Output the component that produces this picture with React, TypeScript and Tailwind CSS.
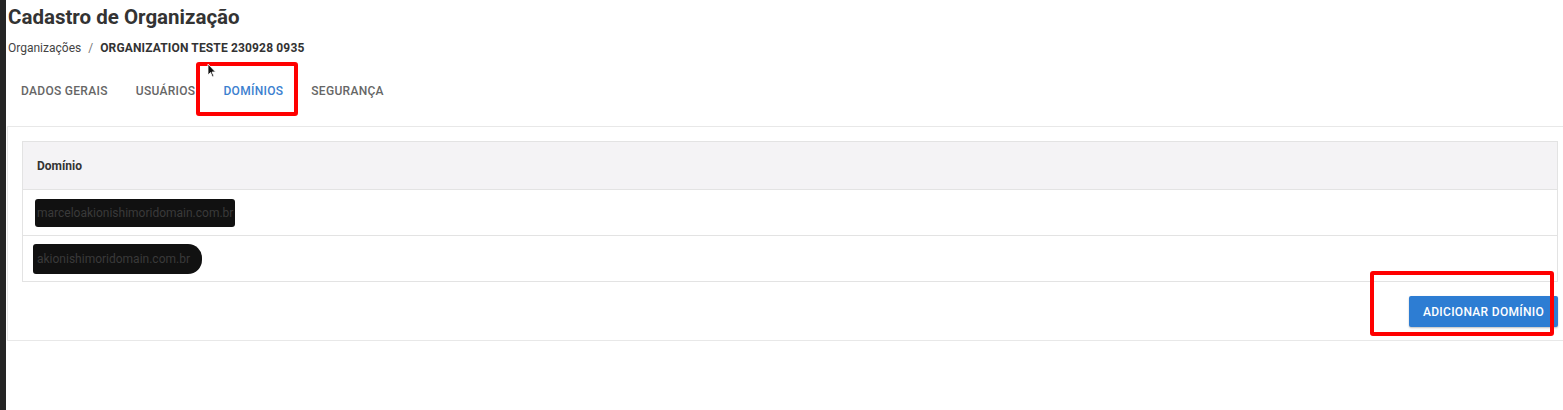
import React from "react";

export default function App() {
  return (
    <div className="relative flex h-[410px] w-[1563px] overflow-hidden bg-white font-['Roboto',sans-serif]">
      <div className="h-full w-[6px] shrink-0 bg-[#252525]" />
      <div className="flex min-w-0 flex-1 flex-col pl-[1px]">
        <h1 className="ml-[1px] mt-[4px] text-[20.5px] font-bold leading-[27px] text-[#333]">
          Cadastro de Organização
        </h1>
        <div className="ml-[1px] mt-[9px] flex items-center text-[12px] leading-[16px] text-[#444]">
          <span>Organizações</span>
          <span className="mx-[7px] text-[#777]">/</span>
          <span className="font-bold tracking-[0.15px] text-[#333]">ORGANIZATION TESTE 230928 0935</span>
        </div>
        <div className="mt-[23px] flex h-[50px] items-start text-[12px] font-medium tracking-[0.3px]">
          <div className="px-[14px] pt-[3px] text-[#666]">DADOS GERAIS</div>
          <div className="px-[14px] pt-[3px] text-[#666]">USUÁRIOS</div>
          <div className="px-[14px] pt-[3px] text-[#3c80cf]">DOMÍNIOS</div>
          <div className="px-[14px] pt-[3px] text-[#666]">SEGURANÇA</div>
        </div>
        <div className="mt-[-3px] w-[1566px] shrink-0 border border-[#e8e8e8] bg-white px-[14px] pb-[13px] pt-[14px]">
          <div className="border border-[#e3e3e3]">
            <div className="flex h-[48px] items-center border-b border-[#e3e3e3] bg-[#f4f3f5] px-[14px] text-[12px] font-bold text-[#333]">
              Domínio
            </div>
            <div className="flex h-[46px] items-center border-b border-[#e3e3e3] px-[12px]">
              <span className="rounded-[3px] bg-[#111] px-[2px] py-[5px] text-[12px] leading-[18px] text-[#3a3a3a]">
                marceloakionishimoridomain.com.br
              </span>
            </div>
            <div className="flex h-[45px] items-center px-[10px]">
              <span className="rounded-l-[3px] rounded-r-[14px] bg-[#111] py-[6px] pl-[4px] pr-[12px] text-[12px] leading-[18px] text-[#3a3a3a]">
                akionishimoridomain.com.br
              </span>
            </div>
          </div>
          <div className="mt-[14px] flex justify-end">
            <button className="h-[31px] w-[149px] rounded-[2px] bg-[#2d7dd3] text-[12px] font-medium tracking-[0.3px] text-white shadow-[0_1px_2px_rgba(0,0,0,0.25)]">
              ADICIONAR DOMÍNIO
            </button>
          </div>
        </div>
      </div>

      {/* red highlight overlays */}
      <div className="pointer-events-none absolute left-[196px] top-[62px] h-[54px] w-[102px] rounded-[3px] border-[4px] border-[#ff0000]" />
      <div className="pointer-events-none absolute left-[1370px] top-[271px] h-[65px] w-[184px] rounded-[3px] border-[4px] border-[#ff0000]" />

      {/* mouse cursor */}
      <svg className="absolute left-[207px] top-[63px]" width="10" height="15" viewBox="0 0 10 15">
        <path d="M1 1 L1 12 L3.5 9.5 L5.5 14 L7 13.3 L5 9 L8.5 9 Z" fill="#111" stroke="#fff" strokeWidth="0.8" />
      </svg>
    </div>
  );
}
